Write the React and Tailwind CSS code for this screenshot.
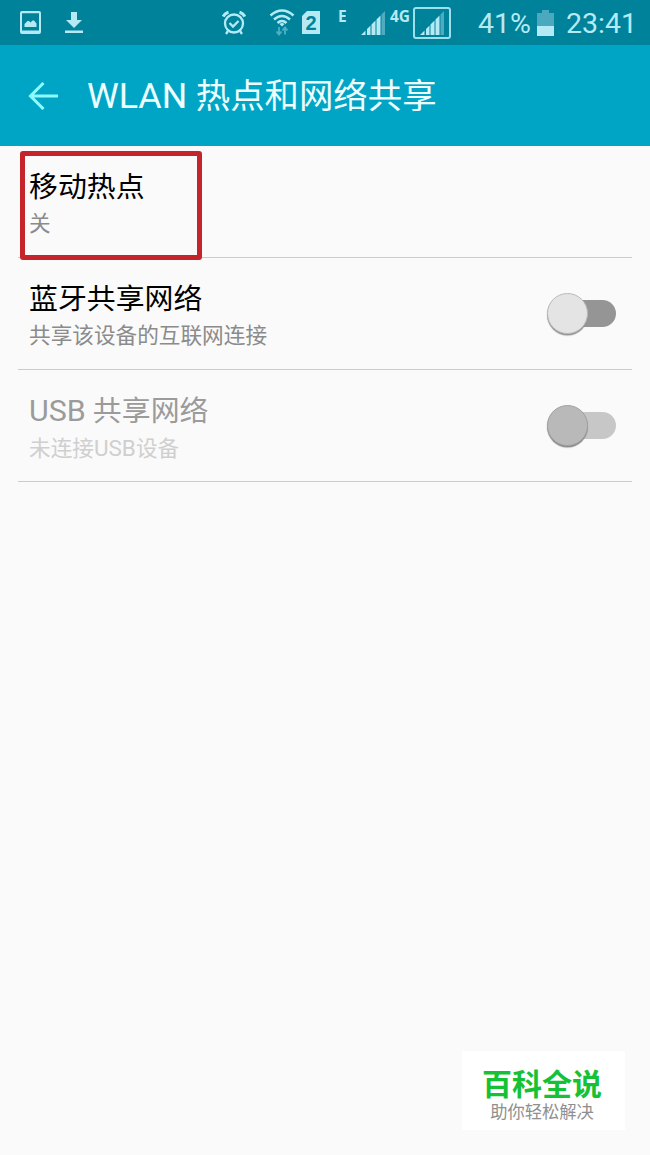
import React, { useState } from "react";

const PictureIcon = () => (
  <svg width="21" height="23" viewBox="0 0 21 23" className="ml-5">
    <path
      fillRule="evenodd"
      fill="#b5eaf4"
      d="M2 0h17a2 2 0 0 1 2 2v19a2 2 0 0 1-2 2H2a2 2 0 0 1-2-2V2a2 2 0 0 1 2-2zM2 2.200v17.300h17V2.200z"
    />
    <path fill="#b5eaf4" d="M4.500 16v-3l3-3h1.500l1.500 1.500 2-2h1.500l2.500 3V16z" />
  </svg>
);

const DownloadIcon = () => (
  <svg width="18" height="21" viewBox="0 0 18 21" className="ml-6" fill="#b5eaf4">
    <path d="M6 0h6v8h5l-8 8-8-8h5z" />
    <path d="M0 18.500h18V21H0z" />
  </svg>
);

const AlarmIcon = () => (
  <svg width="24" height="24" viewBox="0 0 24 24" className="ml-[139px]" fill="none" stroke="#b5eaf4" strokeWidth="2.300">
    <circle cx="12" cy="12.500" r="9" />
    <path d="M7.500 12l3.500 3.500 5.500-5.500" />
    <path d="M1.200 5.500C2.500 3 4 1.800 6.500 1.200M22.800 5.500C21.500 3 20 1.800 17.500 1.200" strokeWidth="3" />
    <path d="M6 20l-2 3M18 20l2 3" />
  </svg>
);

const WifiIcon = () => (
  <svg width="26" height="27" viewBox="0 0 26 27" className="ml-[23px]" fill="none" stroke="#b5eaf4">
    <path d="M1.500 6.500Q13-3.500 24.500 6.500M5 10.500Q13 3.500 21 10.500" strokeWidth="2.600" />
    <path d="M8.500 14Q13 10 17.500 14" strokeWidth="2.400" />
    <path d="M10.500 15Q13 13 15.500 15L13 17.500z" fill="#b5eaf4" stroke="none" />
    <path d="M10 18v7M7.500 22.500L10 25.500l2.500-3M16 25.500V19M13.500 21.500L16 18.500l2.500 3" stroke="#4fb0c4" strokeWidth="1.800" />
  </svg>
);

const SignalBars = () => (
  <svg width="24" height="24" viewBox="0 0 24 24" fill="#b5eaf4">
    <path d="M0 24l4.500-4.500V24zM6 18l3.500-3.500V24H6zM10.500 13.500l4-4V24h-4zM15.500 8.500l4-4V24h-4z" />
    <path d="M20.500 3.500L24 0v24h-3.500z" fill="#4fabc0" />
  </svg>
);

const StatusBar = () => (
  <div className="flex h-[45px] items-center bg-[#00829b] font-['Roboto',sans-serif] text-[#b5eaf4]">
    <PictureIcon />
    <DownloadIcon />
    <AlarmIcon />
    <WifiIcon />
    <div className="ml-[7px] flex h-[23px] w-[18px] items-center justify-center bg-[#b5eaf4] font-['Liberation_Sans',sans-serif] text-[20px] font-bold leading-none text-[#00829b] [clip-path:polygon(5px_0,100%_0,100%_100%,0_100%,0_5px)]">
      2
    </div>
    <span className="mb-3 ml-[18px] w-[9px] font-['Open_Sans',sans-serif] text-[15.500px] font-bold leading-none">E</span>
    <div className="ml-[14px]">
      <SignalBars />
    </div>
    <span className="mb-3 ml-[5px] w-[20px] font-['Open_Sans',sans-serif] text-[15.500px] font-bold leading-none">4G</span>
    <div className="ml-[3px] flex h-[32px] w-[38px] items-end justify-center rounded-[3px] border-2 border-[#9ce0ec] pb-[2px]">
      <SignalBars />
    </div>
    <span className="ml-[27px] mt-[3px] w-[54px] whitespace-nowrap text-[28.500px] leading-none">41%</span>
    <svg width="17" height="26" viewBox="0 0 17 26" className="ml-[5px]">
      <path fill="#4aa9be" d="M5 0h7v3h5v13H0V3h5z" />
      <path fill="#b5eaf4" d="M0 16h17v10H0z" />
    </svg>
    <span className="ml-[12px] mt-[3px] whitespace-nowrap text-[28.500px] leading-none">23:41</span>
  </div>
);

const Header = () => (
  <div className="flex h-[101px] items-center bg-[#00a5c6]">
    <button className="ml-[28px]">
      <svg width="30" height="28" viewBox="0 0 30 28" fill="none" stroke="#8dfcff" strokeWidth="3">
        <path d="M30 14H2M15.500 1L2.500 14l13 13" />
      </svg>
    </button>
    <h1 className="ml-[29px] mt-[3px] whitespace-nowrap text-[34.400px] leading-none text-[#edffff]">
      <span className="text-[35.800px]">WLAN</span> 热点和网络共享
    </h1>
  </div>
);

const Switch = ({ disabled }) => (
  <div className="flex items-center">
    <div
      className={`z-10 size-[41px] rounded-full border ${
        disabled
          ? "border-[#a2a2a2] bg-[#b9b9b9] shadow-[0_1.5px_1px_#888]"
          : "border-[#bababa] bg-[#e4e4e4] shadow-[0_1.5px_1px_#929292]"
      }`}
    />
    <div className={`-ml-5 h-[27px] w-12 rounded-full ${disabled ? "bg-[#c7c7c7]" : "bg-[#959595]"}`} />
  </div>
);

const Row = ({ item }) => {
  const [on, setOn] = useState(false);

  return (
    <div className="flex h-[112px] justify-between border-b border-[#cbcbcb] pl-[11px] pr-4">
      <div className="whitespace-nowrap pt-[21px]">
        <div className={`text-[28.900px] leading-10 ${item.disabled ? "text-[#9b9b9b]" : "text-black"}`}>
          {item.title}
        </div>
        <div className={`text-[21.650px] leading-[34px] ${item.disabled ? "text-[#cfcfcf]" : "text-[#8b8b8b]"}`}>
          {item.text}
        </div>
      </div>
      {item.hasSwitch && (
        <button role="switch" aria-checked={on} disabled={item.disabled} onClick={() => setOn(!on)}>
          <Switch disabled={item.disabled} />
        </button>
      )}
    </div>
  );
};

const items = [
  { title: "移动热点", text: "关" },
  { title: "蓝牙共享网络", text: "共享该设备的互联网连接", hasSwitch: true },
  {
    title: (
      <>
        <span className="text-[30.400px]">USB</span> 共享网络
      </>
    ),
    text: (
      <>
        未连接<span className="text-[22.500px]">USB</span>设备
      </>
    ),
    hasSwitch: true,
    disabled: true,
  },
];

const App = () => {
  return (
    <div className="relative h-[1155px] w-[650px] overflow-hidden bg-[#fafafa] font-['Roboto','Noto_Sans_CJK_SC',sans-serif]">
      <StatusBar />
      <Header />
      <div className="px-[18px]">
        {items.map((item, index) => (
          <Row key={index} item={item} />
        ))}
      </div>

      {/* Highlight around the first row */}
      <div className="absolute left-[20px] top-[151px] h-[109px] w-[182px] rounded-[3px] border-[5px] border-[#c6242b]" />

      {/* Watermark */}
      <div className="absolute left-[462px] top-[1051px] flex h-[79px] w-[163px] flex-col items-center whitespace-nowrap bg-white pr-[3px] pt-[15px]">
        <div className="text-[30px] font-bold leading-[38px] text-[#16c235]">百科全说</div>
        <div className="text-[17.300px] leading-4 text-[#8f8f8f]">助你轻松解决</div>
      </div>
    </div>
  );
};

export default App;
